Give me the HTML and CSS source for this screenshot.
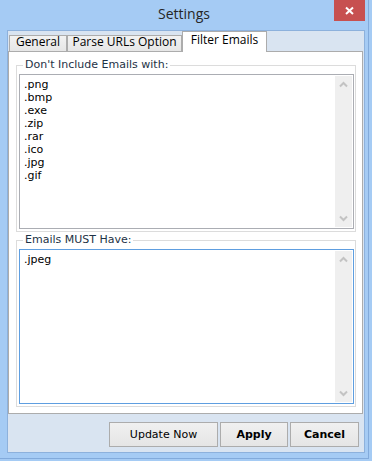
FILE: index.html
```html
<!DOCTYPE html>
<html>
<head>
<meta charset="utf-8">
<title>Settings</title>
<link rel="stylesheet" href="styles.css">
</head>
<body>
<div class="window">
  <div class="titlebar">
    <div class="title">Settings</div>
    <div class="close">
      <svg width="31" height="21" viewBox="0 0 31 21"><path d="M12 7.5 L19 14 M19 7.5 L12 14" stroke="#fff" stroke-width="2" fill="none"/></svg>
    </div>
  </div>
  <div class="client">
    <div class="tabs">
      <div class="tab tab-general">General</div>
      <div class="tab tab-parse">Parse URLs Option</div>
      <div class="tab tab-filter active">Filter Emails</div>
    </div>
    <div class="panel">
      <fieldset class="group">
        <legend>Don't Include Emails with:</legend>
        <div class="textbox">
          <div class="text">
            <div>.png</div><div>.bmp</div><div>.exe</div><div>.zip</div><div>.rar</div><div>.ico</div><div>.jpg</div><div>.gif</div>
          </div>
          <div class="scrollbar">
            <svg class="arrow" width="17" height="17" viewBox="0 0 17 17"><polyline points="5,10.5 8.5,7 12,10.5" stroke="#c3c3c3" stroke-width="2" fill="none"/></svg>
            <div class="track"></div>
            <svg class="arrow" width="17" height="17" viewBox="0 0 17 17"><polyline points="5,6.5 8.5,10 12,6.5" stroke="#c3c3c3" stroke-width="2" fill="none"/></svg>
          </div>
        </div>
      </fieldset>
      <fieldset class="group">
        <legend>Emails MUST Have:</legend>
        <div class="textbox focused">
          <div class="text">
            <div>.jpeg</div>
          </div>
          <div class="scrollbar">
            <svg class="arrow" width="17" height="17" viewBox="0 0 17 17"><polyline points="5,10.5 8.5,7 12,10.5" stroke="#c3c3c3" stroke-width="2" fill="none"/></svg>
            <div class="track"></div>
            <svg class="arrow" width="17" height="17" viewBox="0 0 17 17"><polyline points="5,6.5 8.5,10 12,6.5" stroke="#c3c3c3" stroke-width="2" fill="none"/></svg>
          </div>
        </div>
      </fieldset>
    </div>
    <div class="actions">
      <button class="btn btn-update">Update Now</button>
      <button class="btn btn-apply bold">Apply</button>
      <button class="btn btn-cancel bold">Cancel</button>
    </div>
  </div>
</div>
</body>
</html>
```
FILE: styles.css
```css
html, body {
  margin: 0;
  padding: 0;
}
body {
  width: 372px;
  height: 461px;
  overflow: hidden;
  background: #a5cbf4;
}
.window {
  width: 369px;
  height: 459px;
  box-sizing: border-box;
  border-right: 1px solid #82aadb;
  border-bottom: 1px solid #82aadb;
  display: flex;
  flex-direction: column;
}
.titlebar {
  height: 30px;
  display: grid;
  grid-template-columns: 1fr auto 1fr;
  align-items: start;
}
.title {
  grid-column: 2;
  font-family: "Segoe UI", "Open Sans", sans-serif;
  font-size: 14px;
  line-height: 27px;
  color: #262626;
}
.close {
  grid-column: 3;
  justify-self: end;
  width: 31px;
  height: 21px;
  margin-right: 3px;
  background: #c75050;
}
.close svg {
  display: block;
}
.client {
  margin-left: 7px;
  width: 358px;
  height: 423px;
  box-sizing: border-box;
  border: 1px solid #8db1dc;
  background: #d9e4f1;
  display: flex;
  flex-direction: column;
}
.tabs {
  height: 20px;
  display: flex;
  align-items: flex-end;
  padding-left: 1px;
}
.tab {
  box-sizing: border-box;
  height: 16px;
  border: 1px solid #acacac;
  border-bottom: none;
  background: linear-gradient(#f2f2f2, #e6e6e6);
  font-family: "Segoe UI", "Open Sans", sans-serif;
  font-size: 12px;
  line-height: 11px;
  padding-bottom: 4px;
  text-align: center;
  color: #000;
  white-space: nowrap;
}
.tab-general { width: 58px; }
.tab-parse { width: 115px; }
.tab-filter { width: 85px; }
.tab.active {
  position: relative;
  z-index: 1;
  height: 21px;
  margin-bottom: -1px;
  background: #fff;
  padding-top: 2px;
  padding-bottom: 7px;
}
.panel {
  width: 355px;
  height: 363px;
  box-sizing: border-box;
  border: 1px solid #acacac;
  background: #fff;
  padding: 7px 6px 6px 7px;
  display: flex;
  flex-direction: column;
  gap: 2px;
}
.group {
  margin: 0;
  padding: 2px 1px 2px 2px;
  border: 1px solid #dcdcdc;
  min-width: 0;
}
.group legend {
  font-family: Verdana, "DejaVu Sans", sans-serif;
  font-size: 11px;
  line-height: 11px;
  padding: 0 2px 2px 2px;
  margin-left: 4px;
  color: #1e3246;
}
.textbox {
  height: 155px;
  box-sizing: border-box;
  border: 1px solid #abadb3;
  background: #fff;
  display: flex;
}
.textbox.focused {
  border-color: #5e9ee0;
}
.text {
  flex: 1;
  padding: 3px 4px;
  font-family: Verdana, "DejaVu Sans", sans-serif;
  font-size: 11px;
  line-height: 13px;
  color: #000;
}
.scrollbar {
  width: 17px;
  margin: 1px 1px 1px 0;
  background: #efefef;
  display: flex;
  flex-direction: column;
}
.scrollbar .arrow {
  display: block;
  flex: none;
}
.scrollbar .track {
  flex: 1;
}
.actions {
  display: flex;
  justify-content: flex-end;
  gap: 2px;
  padding: 8px 5px 0 0;
}
.btn {
  height: 25px;
  box-sizing: border-box;
  margin: 0;
  padding: 0;
  border: 1px solid #acacac;
  border-radius: 0;
  background: linear-gradient(#f0f0f0, #e5e5e5);
  font-family: Verdana, "DejaVu Sans", sans-serif;
  font-size: 11px;
  color: #000;
}
.btn.bold {
  font-weight: bold;
}
.btn-update { width: 109px; }
.btn-apply { width: 68px; }
.btn-cancel { width: 69px; }
```
